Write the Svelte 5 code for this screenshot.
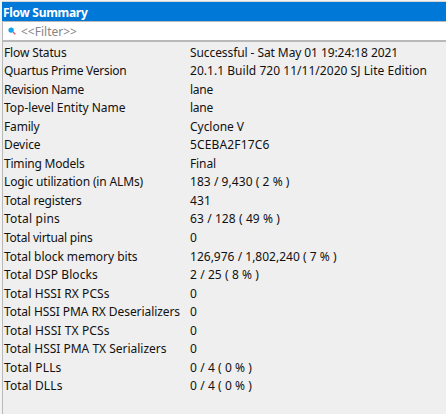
<script>
  // label, label width, value, value width
  const rows = [
    ['Flow Status', 62.5, 'Successful - Sat May 01 19:24:18 2021', 208],
    ['Quartus Prime Version', 122.5, '20.1.1 Build 720 11/11/2020 SJ Lite Edition', 237],
    ['Revision Name', 80, 'lane', 23],
    ['Top-level Entity Name', 121.5, 'lane', 23],
    ['Family', 35.5, 'Cyclone V', 54],
    ['Device', 36.5, '5CEBA2F17C6', 79.5],
    ['Timing Models', 80.5, 'Final', 26],
    ['Logic utilization (in ALMs)', 139, '183 / 9,430 ( 2 % )', 99.5],
    ['Total registers', 77.5, '431', 21],
    ['Total pins', 56, '63 / 128 ( 49 % )', 90],
    ['Total virtual pins', 88.5, '0', 8],
    ['Total block memory bits', 133.5, '126,976 / 1,802,240 ( 7 % )', 146.5],
    ['Total DSP Blocks', 94, '2 / 25 ( 8 % )', 69],
    ['Total HSSI RX PCSs', 105.5, '0', 8],
    ['Total HSSI PMA RX Deserializers', 176, '0', 8],
    ['Total HSSI TX PCSs', 105.5, '0', 8],
    ['Total HSSI PMA TX Serializers', 162.5, '0', 8],
    ['Total PLLs', 57.5, '0 / 4 ( 0 % )', 62],
    ['Total DLLs', 58.5, '0 / 4 ( 0 % )', 62]
  ];

  function fit(node, width) {
    const natural = node.getBoundingClientRect().width;
    const n = node.textContent.length;
    if (n > 1) node.style.letterSpacing = `${(width - natural) / n}px`;
  }
</script>

<main>
  <div class="strip"></div>
  <header><span use:fit={84.5}>Flow Summary</span></header>
  <div class="filter">
    <svg width="9" height="9" viewBox="0 0 9 9">
      <path d="M5 5L7.4 7.4" stroke="#d65363" stroke-width="1.3" />
      <circle cx="3.1" cy="3.1" r="2.7" fill="#12a5ed" />
    </svg>
    <span use:fit={56}>&lt;&lt;Filter&gt;&gt;</span>
  </div>
  <div class="list">
    {#each rows as [label, lw, value, vw]}
      <div class="row">
        <div class="label"><span use:fit={lw}>{label}</span></div>
        <div class="value"><span use:fit={vw}>{value}</span></div>
      </div>
    {/each}
  </div>
</main>

<style>
  :global(body) { background: #f3f3f3; }
  main {
    box-sizing: border-box;
    width: 446px;
    height: 414px;
    padding-left: 2px;
    overflow: hidden;
    display: flex;
    flex-direction: column;
    font-family: "Noto Sans", sans-serif;
    font-size: 12px;
    color: #111;
    white-space: pre;
  }
  .strip { height: 1px; background: #f3f3f3; border-bottom: 1px solid #d9d5d2; flex: none; }
  header {
    height: 19px;
    flex: none;
    background: #0078d7;
    color: #fff;
    font-weight: 700;
    line-height: 21px;
    padding-left: 1px;
  }
  .filter {
    height: 17px;
    flex: none;
    display: flex;
    align-items: center;
    background: #fff;
    border: 1px solid #b9b9b9;
    border-right: 0;
    border-bottom-width: 2px;
    color: #858585;
    padding: 1px 0 0 5px;
    box-sizing: content-box;
    gap: 4px;
  }
  .filter svg { flex: none; }
  .list {
    flex: 1;
    background: #efefef;
    border-left: 1px solid #b9b9b9;
    padding: 1.5px 0 0 1px;
  }
  .row { height: 18.56px; line-height: 18.56px; display: flex; }
  .label { width: 186px; flex: none; }
</style>
